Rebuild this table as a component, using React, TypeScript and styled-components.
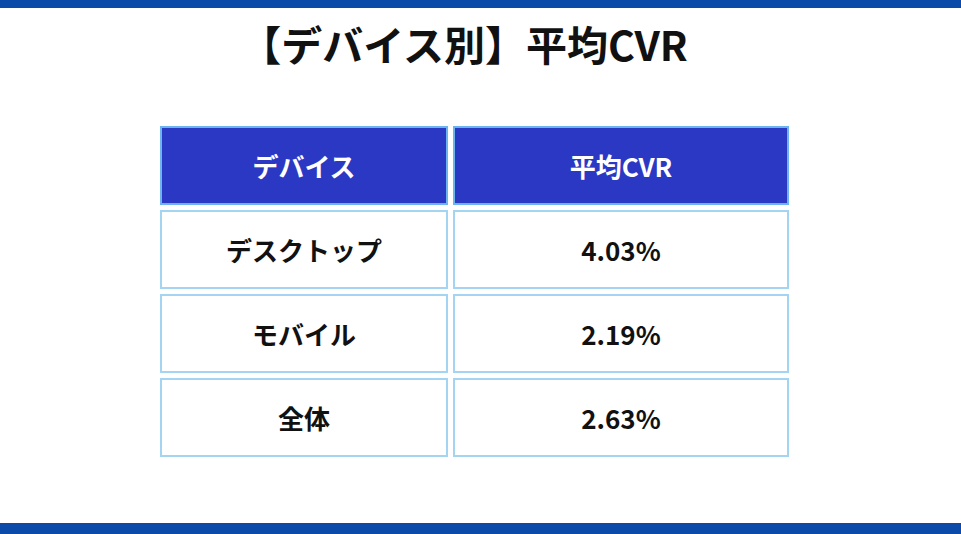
import React from "react";
import styled, { createGlobalStyle } from "styled-components";

const Global = createGlobalStyle`
  html, body { margin: 0; padding: 0; background: #ffffff; }
  body { font-family: "Noto Sans CJK JP", "Noto Sans", sans-serif; }
`;

const Page = styled.div`
  width: 961px;
  height: 534px;
  display: flex;
  flex-direction: column;
  background: #ffffff;
  overflow: hidden;
`;

const Bar = styled.div<{ $h: number }>`
  height: ${(p) => p.$h}px;
  background: #0b4aa8;
  flex: none;
`;

const Body = styled.main`
  flex: 1;
  display: flex;
  flex-direction: column;
  align-items: center;
  padding-right: 12px;
`;

const Title = styled.h1`
  margin: 11px 21px 0 0;
  font-family: "Noto Sans CJK JP", sans-serif;
  font-weight: 700;
  font-size: 41px;
  line-height: 49px;
  color: #111111;
`;

const Table = styled.div`
  margin-top: 58px;
  display: grid;
  grid-template-columns: 288px 336px;
  grid-auto-rows: 79px;
  column-gap: 5px;
  row-gap: 5px;
`;

const Cell = styled.div<{ $head?: boolean }>`
  box-sizing: border-box;
  display: flex;
  align-items: center;
  justify-content: center;
  border: 2px solid ${(p) => (p.$head ? "#6cb4ee" : "#a3d4f2")};
  background: ${(p) => (p.$head ? "#2a38c4" : "#ffffff")};
  color: ${(p) => (p.$head ? "#ffffff" : "#111111")};
  font-family: "Noto Sans CJK JP", sans-serif;
  font-weight: 700;
  font-size: 26px;
`;

const rows: [string, string][] = [
  ["デスクトップ", "4.03%"],
  ["モバイル", "2.19%"],
  ["全体", "2.63%"],
];

export default function App() {
  return (
    <Page>
      <Global />
      <Bar $h={8} />
      <Body>
        <Title>【デバイス別】平均CVR</Title>
        <Table>
          <Cell $head>デバイス</Cell>
          <Cell $head>平均CVR</Cell>
          {rows.map(([d, v]) => (
            <React.Fragment key={d}>
              <Cell>{d}</Cell>
              <Cell>{v}</Cell>
            </React.Fragment>
          ))}
        </Table>
      </Body>
      <Bar $h={11} />
    </Page>
  );
}
